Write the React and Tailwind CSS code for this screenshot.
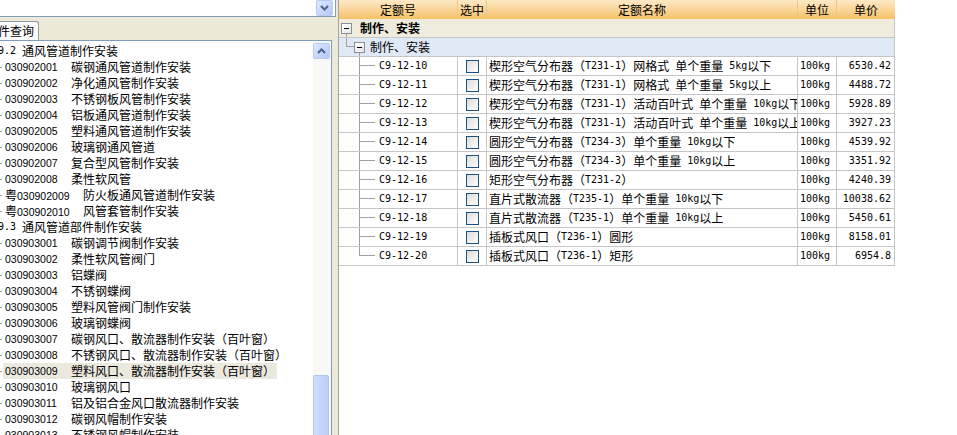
import React from 'react';

const isAscii = (s) => /^[\x20-\x7E]+$/.test(s);
function Mixed({ text, a }) {
  return text
    .split(/([\x20-\x7E]+)/)
    .filter(Boolean)
    .map((p, i) =>
      isAscii(p) ? (
        <span key={i} className={a}>
          {p}
        </span>
      ) : (
        <span key={i}>{p}</span>
      )
    );
}
const MONO = "font-['DejaVu_Sans_Mono',monospace] text-[10px]";

const tree = [
  { h: '9.2 ', t: '通风管道制作安装' },
  { c: '030902001', t: '碳钢通风管道制作安装' },
  { c: '030902002', t: '净化通风管制作安装' },
  { c: '030902003', t: '不锈钢板风管制作安装' },
  { c: '030902004', t: '铝板通风管道制作安装' },
  { c: '030902005', t: '塑料通风管道制作安装' },
  { c: '030902006', t: '玻璃钢通风管道' },
  { c: '030902007', t: '复合型风管制作安装' },
  { c: '030902008', t: '柔性软风管' },
  { c: '030902009', y: true, t: '防火板通风管道制作安装' },
  { c: '030902010', y: true, t: '风管套管制作安装' },
  { h: '9.3 ', t: '通风管道部件制作安装' },
  { c: '030903001', t: '碳钢调节阀制作安装' },
  { c: '030903002', t: '柔性软风管阀门' },
  { c: '030903003', t: '铝蝶阀' },
  { c: '030903004', t: '不锈钢蝶阀' },
  { c: '030903005', t: '塑料风管阀门制作安装' },
  { c: '030903006', t: '玻璃钢蝶阀' },
  { c: '030903007', t: '碳钢风口、散流器制作安装（百叶窗）' },
  { c: '030903008', t: '不锈钢风口、散流器制作安装（百叶窗）' },
  { c: '030903009', t: '塑料风口、散流器制作安装（百叶窗）', sel: true },
  { c: '030903010', t: '玻璃钢风口' },
  { c: '030903011', t: '铝及铝合金风口散流器制作安装' },
  { c: '030903012', t: '碳钢风帽制作安装' },
  { c: '030903013', t: '不锈钢风帽制作安装' },
];

const rows = [
  ['C9-12-10', '楔形空气分布器（T231-1）网格式 单个重量 5kg以下', '6530.42'],
  ['C9-12-11', '楔形空气分布器（T231-1）网格式 单个重量 5kg以上', '4488.72'],
  ['C9-12-12', '楔形空气分布器（T231-1）活动百叶式 单个重量 10kg以下', '5928.89'],
  ['C9-12-13', '楔形空气分布器（T231-1）活动百叶式 单个重量 10kg以上', '3927.23'],
  ['C9-12-14', '圆形空气分布器（T234-3）单个重量 10kg以下', '4539.92'],
  ['C9-12-15', '圆形空气分布器（T234-3）单个重量 10kg以上', '3351.92'],
  ['C9-12-16', '矩形空气分布器（T231-2）', '4240.39'],
  ['C9-12-17', '直片式散流器（T235-1）单个重量 10kg以下', '10038.62'],
  ['C9-12-18', '直片式散流器（T235-1）单个重量 10kg以上', '5450.61'],
  ['C9-12-19', '插板式风口（T236-1）圆形', '8158.01'],
  ['C9-12-20', '插板式风口（T236-1）矩形', '6954.8'],
];

function XPButton({ dir }) {
  return (
    <div className="w-[17px] h-[16px] rounded-[2px] border border-[#b7c9f3] bg-linear-to-br from-[#dde7fe] to-[#b5c9f7] flex items-center justify-center">
      <svg width="9" height="6" viewBox="0 0 9 6">
        {dir === 'up' ? (
          <path d="M1 5 L4.5 1.5 L8 5" fill="none" stroke="#4d6185" strokeWidth="2" />
        ) : (
          <path d="M1 1 L4.5 4.5 L8 1" fill="none" stroke="#4d6185" strokeWidth="2" />
        )}
      </svg>
    </div>
  );
}

function Expander() {
  return (
    <div className="w-[11px] h-[11px] border border-[#8f8f8f] bg-linear-to-br from-white to-[#e6e6e6] flex items-center justify-center">
      <div className="w-[5px] h-[1px] bg-black" />
    </div>
  );
}

function Checkbox() {
  return (
    <div className="w-[13px] h-[13px] border border-[#1c5180] bg-linear-to-br from-[#dcdcd6] to-white" />
  );
}

const LINE = 'border-[#c6c6c6]';

export default function App() {
  return (
    <div className="w-[957px] h-[435px] overflow-hidden flex bg-white text-[12px] text-black font-['Noto_Sans_CJK_SC',sans-serif] leading-none">
      {/* Left panel */}
      <div className="w-[338px] shrink-0 bg-[#ece9d8] flex flex-col">
        <div className="w-[336px] h-[17px] shrink-0 bg-white border-b border-r border-[#7f9db9] flex justify-end items-start pr-[2px]">
          <XPButton dir="down" />
        </div>
        <div className="h-[23px] shrink-0 flex items-end">
          <div className="w-[39px] h-[19px] bg-[#fcfcfe] border-t border-r border-[#919b9c] rounded-tr-[3px] flex items-center overflow-hidden">
            <span className="ml-[-2px] whitespace-nowrap">件查询</span>
          </div>
        </div>
        <div className="w-[332px] h-[420px] shrink-0 bg-white border-t border-r border-[#7f9db9] flex">
          <div className="flex-1 overflow-hidden pt-[2px]">
            {tree.map((r, i) =>
              r.h ? (
                <div key={i} className="h-[16px] flex items-center whitespace-pre ml-[-2px]">
                  <span className={MONO}>{r.h}</span>
                  <span>{r.t}</span>
                </div>
              ) : (
                <div key={i} className="h-[16px] flex items-center whitespace-nowrap">
                  <div className="w-[2px] h-[1px] bg-[#a0a0a0] ml-[0px] mr-[1px]" />
                  <div className={`flex items-center h-[16px] pl-[2px] pr-[2px] ${r.sel ? 'bg-[#ebe8de]' : ''}`}>
                    <span
                      className={`inline-block ${r.y ? 'w-[78px]' : 'w-[66px]'} font-['Liberation_Sans',sans-serif] text-[10.5px]`}
                    >
                      {r.y ? <span className="font-['Noto_Sans_CJK_SC',sans-serif] text-[12px]">粤</span> : null}
                      {r.c}
                    </span>
                    <span>{r.t}</span>
                  </div>
                </div>
              )
            )}
          </div>
          <div className="w-[18px] shrink-0 bg-[#f8f8f4] flex flex-col pt-[2px] pl-[0px]">
            <XPButton dir="up" />
            <div className="h-[316px] shrink-0" />
            <div className="w-[16px] h-[70px] rounded-[2px] border border-[#b2c6f4] bg-linear-to-r from-[#cfdcfd] to-[#bccdf9]" />
          </div>
        </div>
      </div>

      {/* Right panel */}
      <div className="flex-1 border-l border-[#a5a5a5] bg-white">
        <div className="w-[556px]">
          {/* header */}
          <div className="h-[19px] flex bg-linear-to-b from-[#fde9c6] to-[#f5c266]">
            <div className="w-[119px] flex items-center justify-center border-r border-[#e9c98a]">定额号</div>
            <div className="w-[29px] flex items-center justify-center border-r border-[#e9c98a]">选中</div>
            <div className="w-[311px] flex items-center justify-center border-r border-[#e9c98a]">定额名称</div>
            <div className="w-[39px] flex items-center justify-center border-r border-[#e9c98a]">单位</div>
            <div className="w-[58px] flex items-center justify-center">单价</div>
          </div>
          {/* group 1 */}
          <div className={`h-[19px] flex items-stretch bg-[#efebdd] border-b border-r ${LINE}`}>
            <div className="w-[2px]" />
            <div className="w-[11px] flex flex-col">
              <div className="h-[4px]" />
              <Expander />
              <div className="flex-1 ml-[5px] w-[1px] bg-[#a0a0a0]" />
            </div>
            <div className="ml-[8px] flex items-center font-bold">制作、安装</div>
          </div>
          {/* group 2 */}
          <div className={`h-[19px] flex items-stretch bg-[#dfe8f5] border-b border-r ${LINE}`}>
            <div className="w-[7px]" />
            <div className="w-[8px] flex flex-col">
              <div className="h-[9px] border-l border-b border-[#a0a0a0]" />
            </div>
            <div className="w-[11px] flex flex-col">
              <div className="h-[4px]" />
              <Expander />
              <div className="flex-1 ml-[5px] w-[1px] bg-[#a0a0a0]" />
            </div>
            <div className="ml-[5px] flex items-center">制作、安装</div>
          </div>
          {/* data rows */}
          {rows.map((r, i) => (
            <div key={i} className={`h-[19px] flex border-b ${LINE}`}>
              <div className={`w-[119px] flex items-stretch border-r ${LINE}`}>
                <div className="w-[20px]" />
                <div className="w-[16px] flex flex-col">
                  <div className="h-[9px] border-l border-b border-[#a0a0a0]" />
                  {i < rows.length - 1 ? <div className="flex-1 border-l border-[#a0a0a0]" /> : null}
                </div>
                <div className={`ml-[4px] flex items-center ${MONO}`}>{r[0]}</div>
              </div>
              <div className={`w-[29px] flex items-center justify-center border-r ${LINE}`}>
                <Checkbox />
              </div>
              <div className={`w-[311px] flex items-center pl-[2px] overflow-hidden whitespace-pre border-r ${LINE}`}>
                <Mixed text={r[1]} a={MONO} />
              </div>
              <div className={`w-[39px] flex items-center pl-[2px] border-r ${LINE} ${MONO}`}>100kg</div>
              <div className={`w-[58px] flex items-center justify-end pr-[3px] border-r ${LINE} ${MONO}`}>{r[2]}</div>
            </div>
          ))}
        </div>
      </div>
    </div>
  );
}
